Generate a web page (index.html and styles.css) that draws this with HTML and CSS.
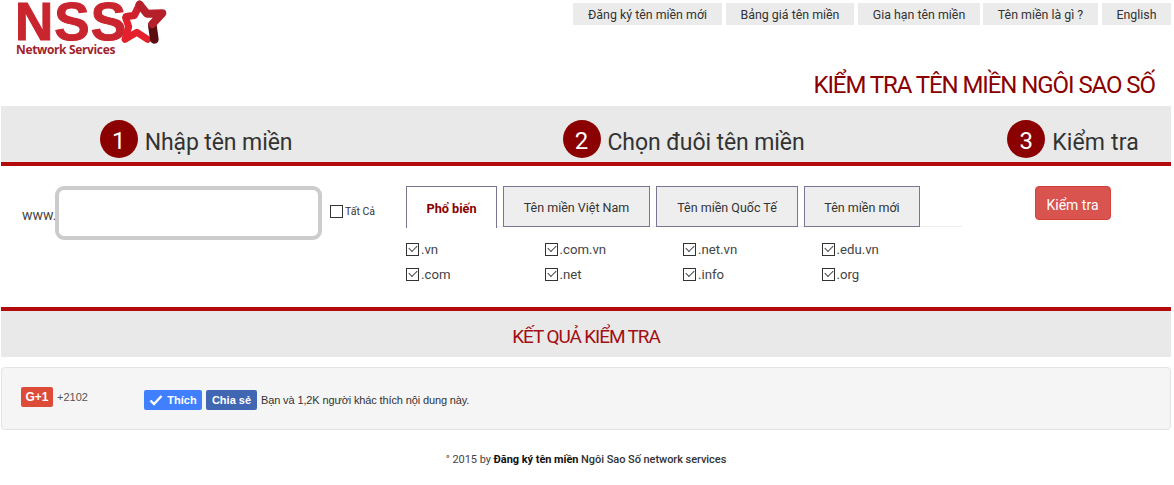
FILE: index.html
```html
<!DOCTYPE html>
<html lang="vi">
<head>
<meta charset="utf-8">
<title>Kiểm tra tên miền Ngôi Sao Số</title>
<link rel="stylesheet" href="styles.css">
</head>
<body>
<div class="page">
  <header class="top">
    <a class="logo">
      <span class="logo-nss">NSS</span>
      <svg class="logo-star" viewBox="0 0 180 150" width="60" height="50" aria-hidden="true">
        <path d="M98 118 L66 97 L30 118 L41 80 L32 54" fill="none" stroke="#e4202c" stroke-width="21" stroke-linecap="round" stroke-linejoin="round"/>
        <path d="M34 50 L58 46 L74 13" fill="none" stroke="#d0202c" stroke-width="22" stroke-linecap="round" stroke-linejoin="round"/>
        <path d="M112 76 L118 118" fill="none" stroke="#5a0e10" stroke-width="26" stroke-linecap="round"/>
        <path d="M74 14 L96 41 L142 40 L112 72" fill="none" stroke="#b5202a" stroke-width="24" stroke-linecap="round" stroke-linejoin="round"/>
      </svg>
      <span class="logo-sub">Network Services</span>
    </a>
    <nav class="menu">
      <a class="menu-item">Đăng ký tên miền mới</a>
      <a class="menu-item">Bảng giá tên miền</a>
      <a class="menu-item">Gia hạn tên miền</a>
      <a class="menu-item">Tên miền là gì ?</a>
      <a class="menu-item">English</a>
    </nav>
  </header>

  <h1 class="page-title">KIỂM TRA TÊN MIỀN NGÔI SAO SỐ</h1>

  <section class="steps">
    <div class="step"><span class="step-num">1</span><span class="step-label">Nhập tên miền</span></div>
    <div class="step"><span class="step-num">2</span><span class="step-label">Chọn đuôi tên miền</span></div>
    <div class="step"><span class="step-num">3</span><span class="step-label">Kiểm tra</span></div>
  </section>

  <section class="form">
    <div class="col-domain">
      <span class="www">www.</span>
      <input class="domain-input" type="text">
      <label class="all"><span class="box"></span><span>Tất Cả</span></label>
    </div>
    <div class="col-tld">
      <div class="tabs">
        <a class="tab tab-active">Phổ biến</a>
        <a class="tab tab-vn">Tên miền Việt Nam</a>
        <a class="tab tab-qt">Tên miền Quốc Tế</a>
        <a class="tab tab-new">Tên miền mới</a>
      </div>
      <div class="tlds">
        <label class="tld"><span class="box checked"></span>.vn</label>
        <label class="tld"><span class="box checked"></span>.com.vn</label>
        <label class="tld"><span class="box checked"></span>.net.vn</label>
        <label class="tld"><span class="box checked"></span>.edu.vn</label>
        <label class="tld"><span class="box checked"></span>.com</label>
        <label class="tld"><span class="box checked"></span>.net</label>
        <label class="tld"><span class="box checked"></span>.info</label>
        <label class="tld"><span class="box checked"></span>.org</label>
      </div>
    </div>
    <div class="col-check">
      <button class="check-btn" type="button">Kiểm tra</button>
    </div>
  </section>

  <section class="result">KẾT QUẢ KIỂM TRA</section>

  <section class="well">
    <div class="gplus">
      <span class="gplus-btn">G+1</span>
      <span class="gplus-count">+2102</span>
    </div>
    <div class="fb">
      <span class="fb-btn fb-like">
        <svg class="fb-check" viewBox="0 0 14 12" width="14" height="12" aria-hidden="true"><path d="M1.5 6.5 L5 10 L12.5 2" fill="none" stroke="#fff" stroke-width="2.4"/></svg>Thích
      </span>
      <span class="fb-btn fb-share">Chia sẻ</span>
      <span class="fb-text">Bạn và 1,2K người khác thích nội dung này.</span>
    </div>
  </section>

  <footer class="footer">° 2015 by <b>Đăng ký tên miền</b> <b class="soft">Ngôi Sao Số network services</b></footer>
</div>
</body>
</html>
```
FILE: styles.css
```css
* { box-sizing: border-box; }
html, body { margin: 0; padding: 0; background: #fff; }
body { font-family: Roboto, "Noto Sans", sans-serif; color: #333; overflow: hidden; }
.page { width: 1171px; padding-left: 1px; }

.top { display: flex; justify-content: space-between; height: 70px; }
.logo { position: relative; display: block; width: 170px; height: 60px; margin-left: 15px; }
.logo-nss { position: absolute; left: -1px; top: 2px; font: 700 53px/40px "Liberation Sans", sans-serif; color: #c9252f; -webkit-text-stroke: 1px #c9252f; letter-spacing: 1px; }
.logo-star { position: absolute; left: 99px; top: 0; }
.logo-sub { position: absolute; left: 0; top: 44px; font: 700 12px/12px "Open Sans", sans-serif; color: #a3232c; white-space: nowrap; letter-spacing: -.35px; }

.menu { display: flex; height: 22px; margin-top: 3px; gap: 4px; }
.menu-item { display: flex; align-items: center; justify-content: center; height: 22px; background: #ebebeb; font-size: 12.4px; color: #333; }
.menu-item:nth-child(1) { width: 149px; }
.menu-item:nth-child(2) { width: 128px; }
.menu-item:nth-child(3) { width: 122px; }
.menu-item:nth-child(4) { width: 115px; margin-left: -1px; }
.menu-item:nth-child(5) { width: 69px; }

.page-title { margin: 0 16px 0 0; height: 36px; text-align: right; font-size: 24px; line-height: 30px; font-weight: 400; color: #8b0000; letter-spacing: -1.07px; }

.steps { display: grid; grid-template-columns: 2fr 3fr 1fr; height: 60px; background: #e9e9e9; border-bottom: 4px solid #b30b0b; }
.step { display: flex; align-items: flex-end; justify-content: center; gap: 7px; padding-bottom: 4px; }
.step-num { display: flex; align-items: center; justify-content: center; width: 38px; height: 38px; padding-top: 3px; border-radius: 50%; background: #8b0000; color: #fff; font-size: 24px; }
.step-label { margin-bottom: -3px; font-size: 23px; line-height: 36px; color: #333; letter-spacing: -.1px; }
.step:nth-child(3) { padding-right: 1px; }
.step:nth-child(3) .step-label { letter-spacing: .15px; }

.form { display: grid; grid-template-columns: 2fr 3fr 1fr; height: 145px; border-bottom: 4px solid #b30b0b; padding-top: 20px; }
.col-domain { display: flex; align-items: flex-start; padding-left: 21px; }
.www { width: 33px; margin-top: 20px; font-size: 14px; line-height: 18px; flex: none; color: #444; }
.domain-input { width: 267px; height: 54px; border: 4px solid #ccc; border-radius: 9px; background: #fff; outline: none; flex: none; }
.all { display: flex; align-items: center; gap: 2px; margin: 19px 0 0 8px; font-size: 10.5px; color: #333; white-space: nowrap; }
.box { display: block; width: 13px; height: 13px; border: 1px solid #333; background: #fff; flex: none; }
.box.checked { position: relative; }
.box.checked::after { content: ""; position: absolute; left: 2px; top: 1px; width: 7px; height: 4px; border-left: 1.5px solid #444; border-bottom: 1.5px solid #444; transform: rotate(-45deg); }

.col-tld { padding-left: 15px; }
.tabs { display: flex; gap: 6px; width: 556px; height: 41px; border-bottom: 1px solid #eee; }
.tab { display: flex; align-items: center; justify-content: center; height: 41px; padding-top: 1px; border: 1px solid #7a7590; background: #eee; font-size: 12.5px; color: #333; }
.tab-active { width: 91px; height: 42px; background: #fff; border-bottom: 0; font-size: 12.7px; font-weight: 700; color: #8b0000; }
.tab-vn { width: 147px; }
.tab-qt { width: 142px; }
.tab-new { width: 116px; }
.tlds { display: grid; grid-template-columns: repeat(4, 138.5px); grid-auto-rows: 25px; padding-top: 10px; }
.tld { display: flex; align-items: center; gap: 2px; font-size: 13.2px; color: #444; }

.col-check { display: flex; justify-content: center; padding-right: 2px; }
.check-btn { width: 76px; height: 34px; padding: 3px 0 0; border: 1px solid #d43f3a; border-radius: 4px; background: #d9534f; color: #fff; font: 14px Roboto, sans-serif; }

.result { height: 46px; background: #e9e9e9; text-align: center; font-size: 19px; line-height: 51px; color: #a30f14; letter-spacing: -1.1px; }

.well { display: flex; height: 63px; margin-top: 10px; border: 1px solid #e3e3e3; border-radius: 4px; background: #f5f5f5; padding: 19px 0 0 19px; }
.gplus { display: flex; align-items: center; gap: 4px; width: 123px; height: 20px; flex: none; }
.gplus-btn { display: flex; align-items: center; justify-content: center; width: 32px; height: 20px; background: #dd4b39; border-radius: 2px; color: #fff; font: 700 12px "Liberation Sans", sans-serif; }
.gplus-count { font: 11px "Liberation Sans", sans-serif; color: #555; }
.fb { display: flex; align-items: center; gap: 4px; height: 20px; margin-top: 3px; }
.fb-btn { display: flex; align-items: center; justify-content: center; height: 20px; border-radius: 2px; color: #fff; font: 700 11px "Liberation Sans", sans-serif; }
.fb-like { width: 58px; background: #4080ff; gap: 4px; }
.fb-share { width: 51px; background: #4267b2; }
.fb-text { font: 11px "Liberation Sans", sans-serif; color: #333; letter-spacing: -.13px; }

.footer { margin-top: 22px; text-align: center; font-size: 11px; line-height: 16px; color: #444; letter-spacing: -.05px; }
.footer b { color: #111; font-weight: 700; }
.footer .soft { color: #333; font-weight: 500; }
```
